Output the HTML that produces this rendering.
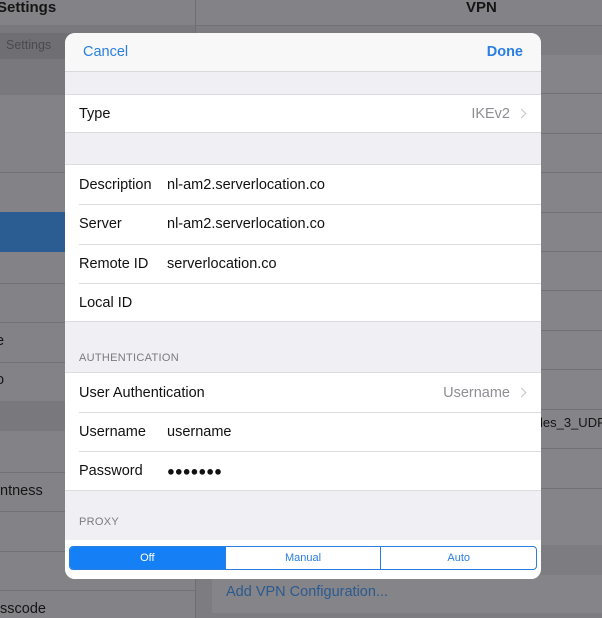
<!DOCTYPE html>
<html><head><meta charset="utf-8"><style>
*{margin:0;padding:0;box-sizing:border-box}
body{width:602px;height:618px;overflow:hidden;background:#7d7c81;font-family:"Liberation Sans",sans-serif;position:relative}
.a{position:absolute}
.ln{position:absolute;height:1px;background:#727176}
.m{position:absolute;left:65px;top:33px;width:476px;height:546px;border-radius:10px;overflow:hidden;background:#efeff4}
.r{position:absolute;left:0;width:476px;background:#fff;font-size:14.5px;color:#111}
.r span{position:absolute;top:50%;transform:translateY(-50%)}
.sep{position:absolute;left:14px;right:0;height:1px;background:#dcdce0}
.gl{position:absolute;left:14px;font-size:11px;color:#7a7a7f;letter-spacing:.3px}
.chev{display:inline-block;width:7px;height:7px;border-right:1.3px solid #c4c4c8;border-top:1.3px solid #c4c4c8;transform:rotate(45deg);margin-left:8px;margin-right:4px;vertical-align:1px}
</style></head><body>
<div class="a" style="left:0;top:0;width:195px;height:618px;background:#838287"></div>
<div class="a" style="left:-3px;top:-1px;font-size:15px;font-weight:bold;color:#151515">Settings</div>
<div class="a" style="left:0;top:25px;width:195px;height:70px;background:#79787d"></div>
<div class="a" style="left:0;top:33px;width:190px;height:26px;background:#6f6e73"></div>
<div class="a" style="left:6px;top:38px;font-size:12.5px;color:#4a4a4e">Settings</div>
<div class="ln" style="left:0;top:172px;width:195px"></div>
<div class="a" style="left:0;top:212px;width:195px;height:40px;background:#2b5d93"></div>
<div class="ln" style="left:0;top:283px;width:195px"></div>
<div class="ln" style="left:0;top:322px;width:195px"></div>
<div class="ln" style="left:0;top:362px;width:195px"></div>
<div class="a" style="left:0;top:401px;width:195px;height:30px;background:#79787d"></div>
<div class="a" style="left:-4px;top:333px;font-size:14.5px;color:#151515">e</div>
<div class="a" style="left:-4px;top:372px;font-size:14.5px;color:#151515">o</div>
<div class="ln" style="left:0;top:472px;width:195px"></div>
<div class="a" style="left:0;top:483px;font-size:14.5px;color:#151515">ntness</div>
<div class="ln" style="left:0;top:511px;width:195px"></div>
<div class="ln" style="left:0;top:551px;width:195px"></div>
<div class="ln" style="left:0;top:590px;width:195px"></div>
<div class="a" style="left:0;top:601px;font-size:14.5px;color:#151515">sscode</div>
<div class="a" style="left:195px;top:0;width:1px;height:618px;background:#6e6d72"></div>
<div class="a" style="left:196px;top:0;width:406px;height:25px;background:#838287"></div>
<div class="a" style="left:466px;top:-1px;font-size:15px;font-weight:bold;color:#151515">VPN</div>
<div class="ln" style="left:196px;top:25px;width:406px"></div>
<div class="a" style="left:212px;top:55px;width:390px;height:490px;background:#858489"></div>
<div class="ln" style="left:212px;top:93px;width:390px"></div>
<div class="ln" style="left:212px;top:133px;width:390px"></div>
<div class="ln" style="left:212px;top:172px;width:390px"></div>
<div class="ln" style="left:212px;top:212px;width:390px"></div>
<div class="ln" style="left:212px;top:251px;width:390px"></div>
<div class="ln" style="left:212px;top:290px;width:390px"></div>
<div class="ln" style="left:212px;top:330px;width:390px"></div>
<div class="ln" style="left:212px;top:369px;width:390px"></div>
<div class="ln" style="left:212px;top:409px;width:390px"></div>
<div class="a" style="left:540px;top:415px;font-size:13px;color:#151515">les_3_UDP</div>
<div class="ln" style="left:212px;top:448px;width:390px"></div>
<div class="ln" style="left:212px;top:488px;width:390px"></div>
<div class="a" style="left:212px;top:575px;width:390px;height:38px;background:#858489"></div>
<div class="a" style="left:226px;top:584px;font-size:14.5px;color:#2b5a8f">Add VPN Configuration...</div>
<div class="m">
 <div class="a" style="left:0;top:0;width:476px;height:39px;background:#f8f8f9;border-bottom:1px solid #d8d8dc"></div>
 <div class="a" style="left:18px;top:11px;font-size:14.5px;color:#2a7fe0">Cancel</div>
 <div class="a" style="right:18px;top:11px;font-size:14.5px;font-weight:bold;color:#2a7fe0">Done</div>
 <div class="r" style="top:61px;height:39px;border-top:1px solid #dcdce0;border-bottom:1px solid #dcdce0"><span style="left:14px">Type</span><span style="right:12px;color:#8e8e93">IKEv2<i class="chev"></i></span></div>
 <div class="r" style="top:131px;height:158px;border-top:1px solid #dcdce0;border-bottom:1px solid #dcdce0">
  <div style="position:absolute;top:0;height:39px;width:100%"><span style="left:14px">Description</span><span style="left:102px">nl-am2.serverlocation.co</span></div>
  <div class="sep" style="top:39px"></div>
  <div style="position:absolute;top:39px;height:40px;width:100%"><span style="left:14px">Server</span><span style="left:102px">nl-am2.serverlocation.co</span></div>
  <div class="sep" style="top:79px"></div>
  <div style="position:absolute;top:79px;height:40px;width:100%"><span style="left:14px">Remote ID</span><span style="left:102px">serverlocation.co</span></div>
  <div class="sep" style="top:118px"></div>
  <div style="position:absolute;top:118px;height:39px;width:100%"><span style="left:14px">Local ID</span></div>
 </div>
 <div class="gl" style="top:319px">AUTHENTICATION</div>
 <div class="r" style="top:339px;height:119px;border-top:1px solid #dcdce0;border-bottom:1px solid #dcdce0">
  <div style="position:absolute;top:0;height:39px;width:100%"><span style="left:14px">User Authentication</span><span style="right:12px;color:#8e8e93">Username<i class="chev"></i></span></div>
  <div class="sep" style="top:39px"></div>
  <div style="position:absolute;top:39px;height:40px;width:100%"><span style="left:14px">Username</span><span style="left:102px">username</span></div>
  <div class="sep" style="top:78px"></div>
  <div style="position:absolute;top:78px;height:40px;width:100%"><span style="left:14px">Password</span><span style="left:102px;font-size:13px;letter-spacing:0px">●●●●●●●</span></div>
 </div>
 <div class="gl" style="top:483px">PROXY</div>
 <div class="a" style="left:0;top:507px;width:476px;height:39px;background:#fff"></div>
 <div class="a" style="left:4px;top:513px;width:468px;height:24px;border:1px solid #2a7fe0;border-radius:4px;overflow:hidden;display:flex;font-size:11px;color:#2a7fe0">
  <div style="flex:1;background:#1580f5;color:#fff;text-align:center;line-height:22px">Off</div>
  <div style="flex:1;border-left:1px solid #2a7fe0;text-align:center;line-height:22px">Manual</div>
  <div style="flex:1;border-left:1px solid #2a7fe0;text-align:center;line-height:22px">Auto</div>
 </div>
</div>
</body></html>
